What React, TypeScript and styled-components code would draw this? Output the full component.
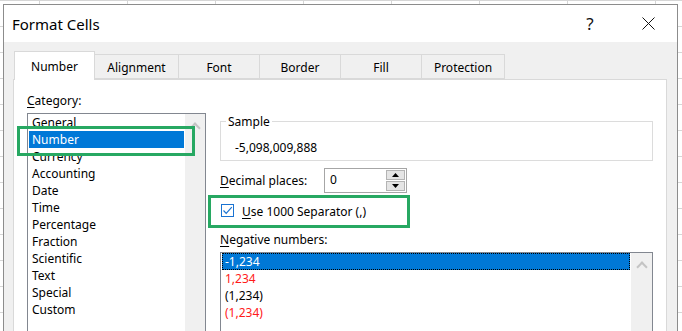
import React from "react";
import styled, { createGlobalStyle } from "styled-components";

const GlobalStyle = createGlobalStyle`
	html, body {
		margin: 0;
		padding: 0;
		overflow: hidden;
	}
	body {
		width: 682px;
		height: 331px;
		background-color: #fff;
		background-image:
			linear-gradient(to right, #d6d6d6 1px, transparent 1px),
			linear-gradient(to bottom, #d6d6d6 1px, transparent 1px);
		background-size: 88px 26px;
		background-position: 39px 0, 0 0;
		font-family: "Noto Sans", "Open Sans", sans-serif;
		font-size: 12px;
		color: #000;
	}
`;

const annotationGreen = "#27a862";

const categories = [
	"General",
	"Number",
	"Currency",
	"Accounting",
	"Date",
	"Time",
	"Percentage",
	"Fraction",
	"Scientific",
	"Text",
	"Special",
	"Custom",
];

const negatives = [
	{ label: "-1,234", red: false },
	{ label: "1,234", red: true },
	{ label: "(1,234)", red: false },
	{ label: "(1,234)", red: true },
];

const tabs = [
	{ label: "Number", width: 81 },
	{ label: "Alignment", width: 84 },
	{ label: "Font", width: 81 },
	{ label: "Border", width: 81 },
	{ label: "Fill", width: 81 },
	{ label: "Protection", width: 83 },
];

export default function App() {
	return (
		<Page>
			<GlobalStyle />
			<Dialog>
				<TitleBar>
					<Title>Format Cells</Title>
					<TitleButton>?</TitleButton>
					<TitleButton>
						<svg width='13' height='13' viewBox='0 0 13 13'>
							<path d='M0.5 0.5 L12.5 12.5 M12.5 0.5 L0.5 12.5' stroke='#111' strokeWidth='1' fill='none' />
						</svg>
					</TitleButton>
				</TitleBar>
				<Body>
					<TabRow>
						{tabs.map((t, i) => (
							<Tab key={t.label} active={i === 0} style={{ width: t.width }}>
								{t.label}
							</Tab>
						))}
					</TabRow>
					<Panel>
						<Column>
							<FieldLabel>
								<AccessKey>C</AccessKey>ategory:
							</FieldLabel>
							<ListBox>
								<ListItems>
									{categories.map((c, i) => (
										<ListItem key={c} selected={i === 1}>
											{c}
										</ListItem>
									))}
								</ListItems>
								<ScrollTrack>
									<Chevron />
								</ScrollTrack>
								<Highlight style={{ left: -11, top: 12, width: 178, height: 30 }} />
							</ListBox>
						</Column>
						<Column>
							<SampleBox>
								<SampleLegend>Sample</SampleLegend>
								<SampleValue>-5,098,009,888</SampleValue>
							</SampleBox>
							<DecimalRow>
								<DecimalLabel>
									<AccessKey>D</AccessKey>ecimal places:
								</DecimalLabel>
								<SpinBox>
									<SpinText>0</SpinText>
									<SpinButtons>
										<SpinButton>
											<svg width='7' height='4' viewBox='0 0 7 4'>
												<path d='M0 4 L3.5 0 L7 4 Z' fill='#000' />
											</svg>
										</SpinButton>
										<SpinButton>
											<svg width='7' height='4' viewBox='0 0 7 4'>
												<path d='M0 0 L3.5 4 L7 0 Z' fill='#000' />
											</svg>
										</SpinButton>
									</SpinButtons>
								</SpinBox>
							</DecimalRow>
							<CheckRow>
								<CheckBox>
									<svg width='11' height='11' viewBox='0 0 11 11'>
										<path d='M1.5 5.5 L4.2 8.3 L9.8 2.2' stroke='#1a73d2' strokeWidth='1.2' fill='none' />
									</svg>
								</CheckBox>
								<span>
									<AccessKey>U</AccessKey>se 1000 Separator (,)
								</span>
								<Highlight style={{ left: -12, top: 0, width: 202, height: 33 }} />
							</CheckRow>
							<NegLabel>
								<AccessKey>N</AccessKey>egative numbers:
							</NegLabel>
							<ListBox>
								<ListItems>
									{negatives.map((n, i) => (
										<NegItem key={i} selected={i === 0} red={n.red}>
											{n.label}
										</NegItem>
									))}
								</ListItems>
								<ScrollTrack wide>
									<Chevron />
								</ScrollTrack>
							</ListBox>
						</Column>
					</Panel>
				</Body>
			</Dialog>
		</Page>
	);
}

const Page = styled.div`
	padding: 4px 0 0 3px;
`;

const Dialog = styled.div`
	width: 675px;
	height: 327px;
	box-sizing: border-box;
	border: 1px solid #8c8c8c;
	border-bottom: none;
	background: #f0f0f0;
	display: flex;
	flex-direction: column;
`;

const TitleBar = styled.div`
	height: 37px;
	flex: none;
	background: #fff;
	display: flex;
	align-items: center;
	padding-left: 8px;
`;

const Title = styled.div`
	font-size: 15px;
	flex: 1;
`;

const TitleButton = styled.div`
	width: 58px;
	height: 100%;
	display: flex;
	align-items: center;
	justify-content: center;
	font-size: 17px;
	color: #111;
`;

const Body = styled.div`
	flex: 1;
	min-height: 0;
	padding: 9px 10px 0 9px;
	display: flex;
	flex-direction: column;
`;

const TabRow = styled.div`
	display: flex;
	align-items: flex-end;
	height: 28px;
	flex: none;
	padding-left: 1px;
	position: relative;
	z-index: 1;
`;

const Tab = styled.div<{ active?: boolean }>`
	box-sizing: border-box;
	height: ${(p) => (p.active ? "29px" : "25px")};
	margin-bottom: ${(p) => (p.active ? "-1px" : "0")};
	background: ${(p) => (p.active ? "#fff" : "#f0f0f0")};
	border: 1px solid #d9d9d9;
	border-left-width: ${(p) => (p.active ? "1px" : "0")};
	border-bottom: ${(p) => (p.active ? "none" : "1px solid #d9d9d9")};
	display: flex;
	align-items: center;
	justify-content: center;
	padding-top: ${(p) => (p.active ? "1px" : "2px")};
	font-size: 12px;
`;

const Panel = styled.div`
	flex: 1;
	min-height: 0;
	background: #fff;
	border: 1px solid #d9d9d9;
	border-bottom: none;
	display: grid;
	grid-template-columns: 179px 1fr;
	column-gap: 14px;
	padding: 13px 13px 0 13px;
	align-items: stretch;
`;

const Column = styled.div`
	display: flex;
	flex-direction: column;
	align-items: flex-start;
	min-height: 0;
`;

const AccessKey = styled.span`
	text-decoration: underline;
	text-underline-offset: 2px;
`;

const FieldLabel = styled.div`
	line-height: 16px;
	height: 16px;
	margin-bottom: 4px;
`;

const ListBox = styled.div`
	position: relative;
	box-sizing: border-box;
	flex: 1;
	align-self: stretch;
	border: 1px solid #828790;
	border-bottom: none;
	background: #fff;
	display: flex;
`;

const ListItems = styled.div`
	flex: 1;
	padding: 0 1px;
`;

const ListItem = styled.div<{ selected?: boolean }>`
	height: 17px;
	line-height: 17px;
	padding-left: 3px;
	background: ${(p) => (p.selected ? "#0078d7" : "transparent")};
	color: ${(p) => (p.selected ? "#fff" : "#000")};
	white-space: nowrap;
`;

const NegItem = styled(ListItem)<{ red?: boolean }>`
	box-sizing: border-box;
	color: ${(p) => (p.selected ? "#fff" : p.red ? "#ff1a1a" : "#000")};
	outline: ${(p) => (p.selected ? "1px dotted #000" : "none")};
	outline-offset: -1px;
`;

const ScrollTrack = styled.div<{ wide?: boolean }>`
	width: ${(p) => (p.wide ? "21px" : "20px")};
	background: #f0f0f0;
	display: flex;
	justify-content: center;
	padding-top: 7px;
	box-sizing: border-box;
`;

const Chevron = styled.div`
	width: 6px;
	height: 6px;
	border-left: 2px solid #c4c4c4;
	border-top: 2px solid #c4c4c4;
	transform: rotate(45deg);
	margin-top: 3px;
`;

const Highlight = styled.div`
	position: absolute;
	box-sizing: border-box;
	border: 3px solid ${annotationGreen};
	pointer-events: none;
`;

const SampleBox = styled.fieldset`
	box-sizing: border-box;
	width: 433px;
	margin: 20px 0 0 0;
	padding: 9px 4px 4px 14px;
	border: 1px solid #dcdcdc;
	min-inline-size: 0;
`;

const SampleLegend = styled.legend`
	margin-left: -9px;
	padding: 0 2px;
	line-height: 17px;
	font-size: 12px;
`;

const SampleValue = styled.div`
	line-height: 17px;
`;

const DecimalRow = styled.div`
	display: flex;
	align-items: center;
	margin-top: 7px;
	height: 25px;
`;

const DecimalLabel = styled.div`
	width: 104px;
`;

const SpinBox = styled.div`
	box-sizing: border-box;
	width: 83px;
	height: 25px;
	border: 1px solid #a6a6a6;
	display: flex;
	align-items: stretch;
`;

const SpinText = styled.div`
	flex: 1;
	padding-left: 5px;
	line-height: 22px;
`;

const SpinButtons = styled.div`
	width: 19px;
	display: flex;
	flex-direction: column;
	gap: 1px;
	padding: 1px 1px 1px 0;
`;

const SpinButton = styled.div`
	flex: 1;
	background: #e5e5e5;
	border: 1px solid #b4b4b4;
	display: flex;
	align-items: center;
	justify-content: center;
`;

const CheckRow = styled.div`
	position: relative;
	display: flex;
	align-items: center;
	gap: 8px;
	height: 33px;
	margin-top: 2px;
	padding-left: 1px;
	width: 190px;
	flex: none;
`;

const CheckBox = styled.div`
	box-sizing: border-box;
	width: 13px;
	height: 13px;
	border: 1px solid #1a73d2;
	background: #fff;
	display: flex;
	align-items: center;
	justify-content: center;
	margin-top: -2px;
`;

const NegLabel = styled.div`
	line-height: 16px;
	height: 16px;
	margin-top: 4px;
	margin-bottom: 4px;
`;
